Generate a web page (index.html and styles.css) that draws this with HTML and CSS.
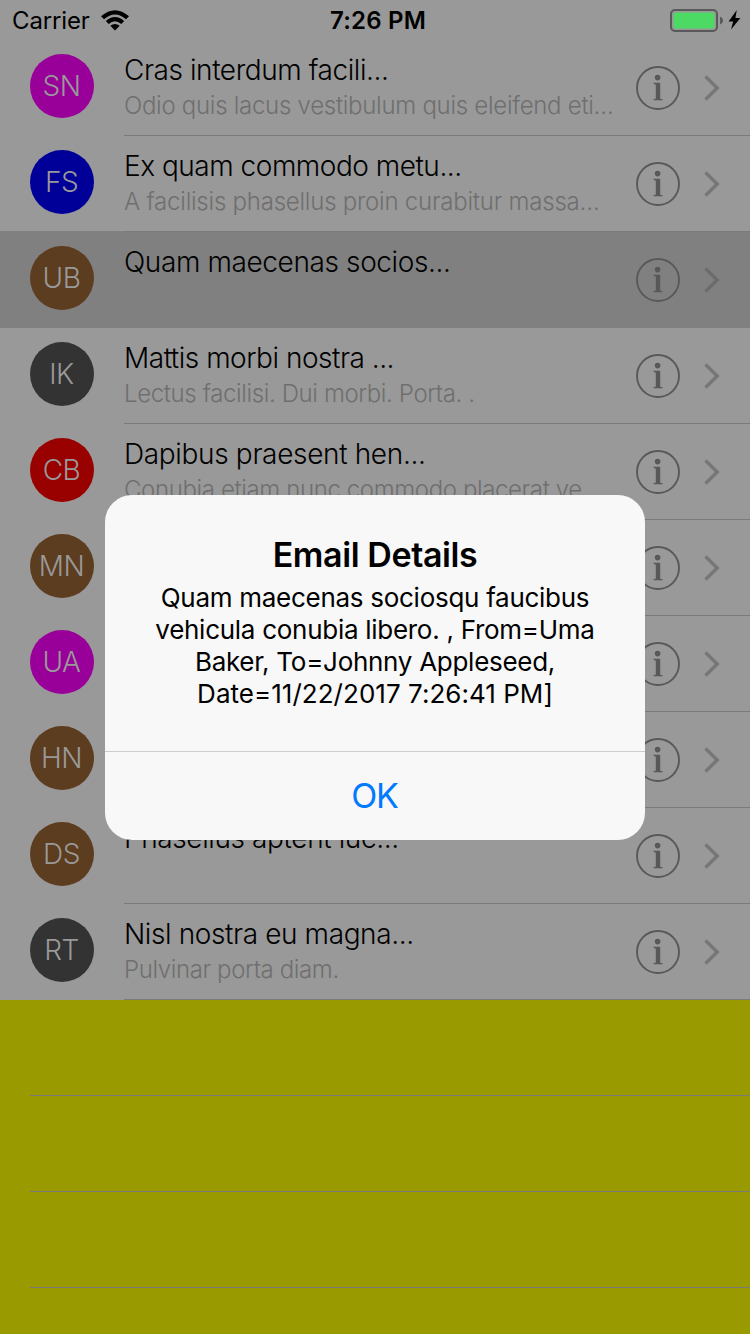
FILE: index.html
```html
<!DOCTYPE html>
<html lang="en">
<head>
<meta charset="utf-8">
<title>Inbox</title>
<link rel="stylesheet" href="styles.css">
</head>
<body>
<svg class="defs" aria-hidden="true">
  <symbol id="info" viewBox="0 0 44 44">
    <circle cx="22" cy="22" r="21" fill="none" stroke="currentColor" stroke-width="1.9"/>
    <circle cx="21.6" cy="11.6" r="2.8" fill="currentColor"/>
    <path d="M17.6 16.8H24.2V32.7L26.4 33.1V34.2H17.6V33.1L19.8 32.7V18.4L17.6 18Z" fill="currentColor"/>
  </symbol>
  <symbol id="chevron" viewBox="0 0 16 26">
    <path d="M1.5 1.5L13.2 13L1.5 24.5" fill="none" stroke="currentColor" stroke-width="3.4"/>
  </symbol>
</svg>
<div class="screen">
  <header class="status">
    <div class="status-left">
      <span class="carrier">Carrier</span>
      <svg class="wifi" viewBox="0 0 28 21">
        <path d="M0 6.3Q14-6 28 6.3L25 9.3Q14-.2 3 9.3Z"/>
        <path d="M4.8 11.1Q14 3.1 23.2 11.1L20.3 14Q14 8.7 7.7 14Z"/>
        <path d="M9.3 15.8Q14 12.2 18.7 15.8L14 20.5Z"/>
      </svg>
    </div>
    <span class="clock">7:26 PM</span>
    <div class="status-right">
      <svg class="battery" viewBox="0 0 71 24">
        <rect x="1" y="2" width="46" height="21" rx="4" fill="none" stroke="#595959" stroke-width="2"/>
        <rect x="3.6" y="4.6" width="40.8" height="15.8" rx="2" fill="#4cd964"/>
        <path d="M50 8.8Q53 9.8 53 12.6T50 16.4Z" fill="#595959"/>
        <path d="M66.8 2L58.6 13.6H63.2L61 21.6L70.4 10H65.4Z" fill="#000"/>
      </svg>
    </div>
  </header>
  <main class="list">
    <div class="row"><span class="avatar magenta">SN</span><div class="cell"><div class="copy"><div class="title t1">Cras interdum facili...</div><div class="sub s1">Odio quis lacus vestibulum quis eleifend eti…</div></div><svg class="info"><use href="#info"/></svg><svg class="chevron"><use href="#chevron"/></svg></div></div>
    <div class="row"><span class="avatar blue">FS</span><div class="cell"><div class="copy"><div class="title t2">Ex quam commodo metu...</div><div class="sub s2">A facilisis phasellus proin curabitur massa…</div></div><svg class="info"><use href="#info"/></svg><svg class="chevron"><use href="#chevron"/></svg></div></div>
    <div class="row selected"><span class="avatar brown">UB</span><div class="cell"><div class="copy"><div class="title">Quam maecenas socios...</div></div><svg class="info"><use href="#info"/></svg><svg class="chevron"><use href="#chevron"/></svg></div></div>
    <div class="row"><span class="avatar gray">IK</span><div class="cell"><div class="copy"><div class="title t4">Mattis morbi nostra ...</div><div class="sub">Lectus facilisi. Dui morbi. Porta. .</div></div><svg class="info"><use href="#info"/></svg><svg class="chevron"><use href="#chevron"/></svg></div></div>
    <div class="row"><span class="avatar red">CB</span><div class="cell"><div class="copy"><div class="title t5">Dapibus praesent hen...</div><div class="sub">Conubia etiam nunc commodo placerat ve</div></div><svg class="info"><use href="#info"/></svg><svg class="chevron"><use href="#chevron"/></svg></div></div>
    <div class="row"><span class="avatar brown">MN</span><div class="cell"><div class="copy"></div><svg class="info"><use href="#info"/></svg><svg class="chevron"><use href="#chevron"/></svg></div></div>
    <div class="row"><span class="avatar magenta">UA</span><div class="cell"><div class="copy"></div><svg class="info"><use href="#info"/></svg><svg class="chevron"><use href="#chevron"/></svg></div></div>
    <div class="row"><span class="avatar brown">HN</span><div class="cell"><div class="copy"></div><svg class="info"><use href="#info"/></svg><svg class="chevron"><use href="#chevron"/></svg></div></div>
    <div class="row"><span class="avatar brown">DS</span><div class="cell"><div class="copy"><div class="title">Phasellus aptent luc...</div></div><svg class="info"><use href="#info"/></svg><svg class="chevron"><use href="#chevron"/></svg></div></div>
    <div class="row"><span class="avatar gray">RT</span><div class="cell"><div class="copy"><div class="title">Nisl nostra eu magna...</div><div class="sub">Pulvinar porta diam.</div></div><svg class="info"><use href="#info"/></svg><svg class="chevron"><use href="#chevron"/></svg></div></div>
  </main>
  <div class="blank">
    <div class="blank-row"></div>
    <div class="blank-row"></div>
    <div class="blank-row"></div>
  </div>
  <div class="alert" role="alertdialog">
    <div class="alert-body">
      <h1 class="alert-title">Email Details</h1>
      <p class="alert-text">Quam maecenas sociosqu faucibus<br>vehicula conubia libero. , From=Uma<br>Baker, To=Johnny Appleseed,<br><span class="date">Date=11/22/2017 7:26:41 PM]</span></p>
    </div>
    <button class="ok">OK</button>
  </div>
</div>
</body>
</html>
```
FILE: styles.css
```css
* { box-sizing: border-box; }
body { margin: 0; font-family: Inter, "Liberation Sans", sans-serif; }
.defs { display: none; }
.screen {
  position: relative;
  width: 750px;
  height: 1334px;
  overflow: hidden;
  background: #999;
  display: flex;
  flex-direction: column;
}
.status {
  flex: none;
  height: 40px;
  display: grid;
  grid-template-columns: 1fr auto 1fr;
  align-items: center;
  padding: 0 9px 0 12px;
  font-size: 24px;
  color: #000;
}
.status-left { display: flex; align-items: center; gap: 11px; }
.carrier { letter-spacing: -0.15px; padding-top: 1px; }
.wifi { width: 28px; height: 21px; }
.clock { font-weight: 600; letter-spacing: 0.2px; padding: 1px 0 0 3px; }
.status-right { display: flex; justify-content: flex-end; }
.battery { width: 71px; height: 24px; }
.list { flex: none; }
.row { height: 96px; display: flex; padding-left: 30px; }
.selected { background: #808080; margin-top: -1px; height: 97px; padding-top: 1px; }
.selected .cell { border-color: transparent; }
.selected .chevron { color: #6c6c6c; }
.avatar {
  width: 64px;
  height: 64px;
  margin: 14px 30px 0 0;
  padding-right: 1px;
  border-radius: 50%;
  display: flex;
  align-items: center;
  justify-content: center;
  font-size: 28px;
  font-weight: 300;
  letter-spacing: -0.5px;
  color: #999;
}
.magenta { background: #909; }
.blue { background: #009; }
.brown { background: #5c3d1f; }
.gray { background: #333; }
.red { background: #900; }
.cell {
  flex: 1;
  display: flex;
  border-bottom: 1px solid #7a797b;
}
.copy { width: 512px; padding-top: 12px; white-space: nowrap; font-weight: 300; }
.title { font-size: 28px; line-height: 36px; letter-spacing: -0.39px; color: #000; }
.t1 { letter-spacing: -0.43px; }
.t2, .t4 { letter-spacing: -0.48px; }
.t5 { letter-spacing: -0.34px; }
.sub { font-size: 24px; line-height: 35px; letter-spacing: -0.38px; color: #6f6f6f; }
.s1 { letter-spacing: -0.28px; }
.s2 { letter-spacing: -0.23px; }
.info { width: 44px; height: 44px; margin-top: 26px; color: #585858; }
.chevron { width: 16px; height: 26px; margin: 35px 0 0 24px; color: #777; }
.blank { flex: 1; background: #990; padding-left: 30px; }
.blank-row { height: 96px; border-bottom: 1px solid #7a797b; }
.alert {
  position: absolute;
  left: 105px;
  top: 495px;
  width: 540px;
  height: 345px;
  border-radius: 27px;
  overflow: hidden;
  background: #f8f8f8;
  display: flex;
  flex-direction: column;
  text-align: center;
  color: #000;
}
.alert-body { height: 257px; padding-top: 40px; border-bottom: 1px solid #cdcdd0; }
.alert-title { margin: 0; font-size: 34px; font-weight: 600; line-height: 40px; letter-spacing: -0.4px; }
.alert-text { margin: 7px 0 0; font-size: 26px; line-height: 32px; letter-spacing: -0.28px; }
.date { letter-spacing: 0.03px; }
.ok {
  flex: 1;
  border: 0;
  padding: 0 1px 0 0;
  background: none;
  font: 400 34px/40px Inter, "Liberation Sans", sans-serif;
  letter-spacing: -1.2px;
  color: #007aff;
}
```
